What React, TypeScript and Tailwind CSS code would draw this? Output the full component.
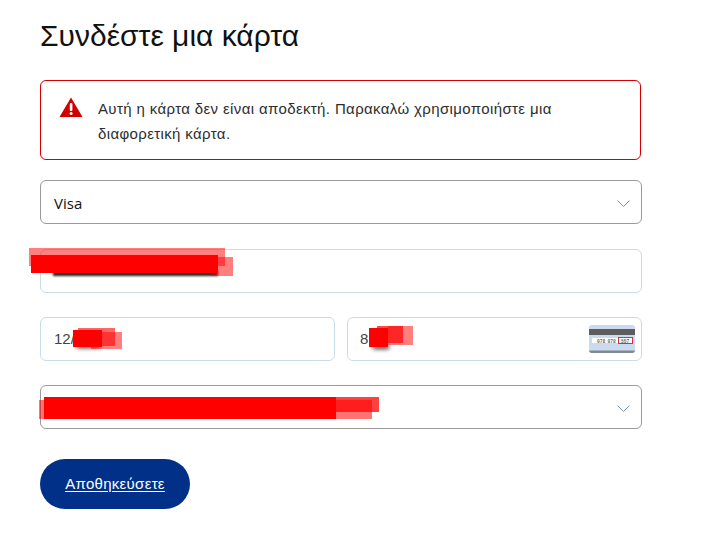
import { ReactNode } from "react";

function Chevron() {
  return (
    <svg width="13" height="7" viewBox="0 0 13 7" fill="none" className="ml-auto mt-[3px] shrink-0">
      <path d="M0.5 0.5l6 6 6-6" stroke="#7f94a6" strokeWidth="1" />
    </svg>
  );
}

function SelectBox({ children, className }: { children?: ReactNode; className?: string }) {
  return (
    <div className={`relative flex h-11 items-center rounded-md border border-[#9a9a9a] pl-[13px] pr-[11px] ${className ?? ""}`}>
      {children}
      <Chevron />
    </div>
  );
}

function CvvCard() {
  return (
    <svg width="46" height="28" viewBox="0 0 46 28" className="shrink-0">
      <rect width="46" height="28" rx="3" fill="#c9daf1" />
      <path d="M0 25.5h46V25a3 3 0 0 1-3 3H3a3 3 0 0 1-3-3z" fill="#85888f" />
      <rect y="4" width="46" height="6" fill="#5d5d60" />
      <rect x="3" y="13" width="27" height="5" fill="#fff" />
      <rect x="29.5" y="12.5" width="14" height="6" fill="#fff" stroke="#d5333a" />
      <text x="8" y="17.5" fontSize="4.6" fontFamily="'Liberation Mono', monospace" fontWeight="700" fill="#666">
        078
      </text>
      <text x="18.5" y="17.5" fontSize="4.6" fontFamily="'Liberation Mono', monospace" fontWeight="700" fill="#666">
        078
      </text>
      <text x="32" y="17.5" fontSize="4.6" fontFamily="'Liberation Mono', monospace" fontWeight="700" fill="#666">
        557
      </text>
    </svg>
  );
}

export default function App() {
  return (
    <div className="h-[537px] w-[702px] overflow-hidden bg-white pl-10 pt-[15px] font-['Liberation_Sans',sans-serif] text-[#2c2e2f]">
      <div className="w-[602px]">
        <h1 className="h-[42px] text-[30px] leading-[42px] text-[#111]">Συνδέστε μια κάρτα</h1>

        <div className="mt-[23px] flex h-20 w-[601px] items-start rounded-md border border-[#d20000] pl-[18px] pt-[15px]">
          <svg width="24" height="20" viewBox="0 0 24 20" className="mt-[1px] shrink-0">
            <path d="M12 0.5L23.5 20H0.5z" fill="#d20000" />
            <rect x="10.8" y="6" width="2.6" height="8" rx="1" fill="#fff" />
            <circle cx="12.1" cy="16.6" r="1.5" fill="#fff" />
          </svg>
          <p className="ml-[15px] w-[480px] text-[15px] leading-[25px] tracking-[0.37px] text-[#2c2e2f]">
            Αυτή η κάρτα δεν είναι αποδεκτή. Παρακαλώ χρησιμοποιήστε μια διαφορετική κάρτα.
          </p>
        </div>

        <SelectBox className="mt-5">
          <span className="pt-[3px] font-['Open_Sans',sans-serif] text-[15px] text-[#111]">Visa</span>
        </SelectBox>

        <div className="relative mt-[25px] h-11 rounded-md border border-[#c9dce9]">
          <div className="absolute left-[12px] top-[21px] h-[5px] w-[165px] bg-[#222] blur-[1px]" />
          <div className="absolute left-[-12px] top-[-2px] h-[18px] w-[196px] bg-[#ff0000]/50" />
          <div className="absolute left-[-10px] top-[5px] h-[18px] w-[187px] bg-[#ff0000]" />
          <div className="absolute left-[170px] top-[7px] h-[19px] w-[22px] bg-[#ff0000]/50" />
        </div>

        <div className="mt-6 flex gap-3">
          <div className="relative flex h-11 w-[295px] items-center rounded-md border border-[#c9dce9] pl-[13px] text-[15px] text-[#444]">
            12/
            <div className="absolute left-[36px] top-[26px] h-[4px] w-[22px] bg-[#333] blur-[2px]" />
            <div className="absolute left-[37px] top-[10px] h-[18px] w-[37px] bg-[#ff0000]/60" />
            <div className="absolute left-[32px] top-[12px] h-[17px] w-[29px] bg-[#ff0000]" />
            <div className="absolute left-[50px] top-[14px] h-[17px] w-[31px] bg-[#ff0000]/50" />
          </div>
          <div className="relative flex h-11 w-[295px] items-center justify-between rounded-md border border-[#c9dce9] pl-3 pr-[6px] text-[15px] text-[#444]">
            <span>8</span>
            <CvvCard />
            <div className="absolute left-[25px] top-[27px] h-[4px] w-[16px] bg-[#333] blur-[2px]" />
            <div className="absolute left-[29px] top-[8px] h-[17px] w-[26px] bg-[#ff0000]/70" />
            <div className="absolute left-[21px] top-[10px] h-[19px] w-[19px] bg-[#ff0000]" />
            <div className="absolute left-[40px] top-[8px] h-[19px] w-[25px] bg-[#ff0000]/50" />
          </div>
        </div>

        <SelectBox className="mt-6">
          <div className="absolute left-[-2px] top-[14px] h-[19px] w-[333px] bg-[#ff0000]/55" />
          <div className="absolute left-[3px] top-[11px] h-[22px] w-[292px] bg-[#ff0000]" />
          <div className="absolute left-[292px] top-[11px] h-[15px] w-[46px] bg-[#ff0000]/75" />
        </SelectBox>

        <button
          type="button"
          className="mt-[30px] block h-[50px] w-[150px] rounded-full bg-[#003087] text-[15px] font-normal tracking-[0.3px] text-white underline underline-offset-2"
        >
          Αποθηκεύσετε
        </button>
      </div>
    </div>
  );
}
